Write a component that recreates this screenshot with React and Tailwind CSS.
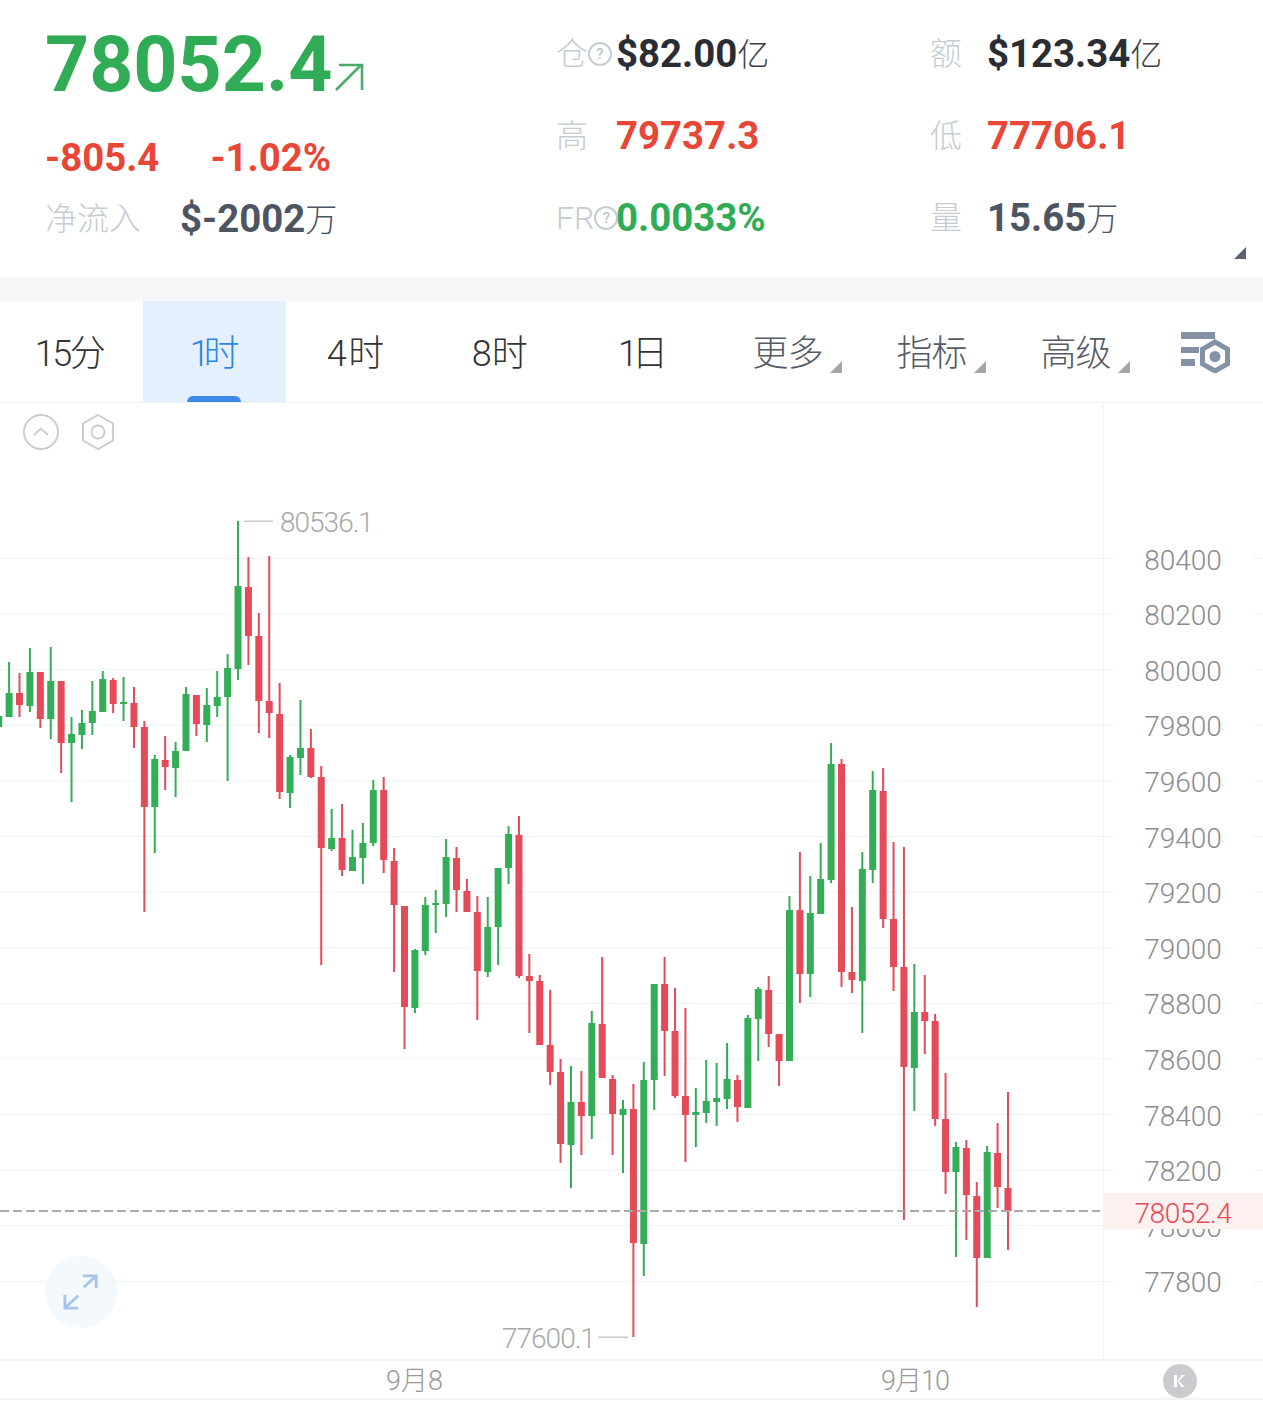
import React from 'react';

const GREEN = '#34ad57';
const RED = '#e44a58';

// g/r, wick top, wick bottom, body top, body bottom (page y)
const candles = [
  ['g', 662, 735, 716, 727], ['g', 662, 717, 693, 717], ['r', 673, 717, 693, 705], ['g', 648, 712, 672, 706],
  ['r', 672, 728, 672, 719], ['g', 647, 739, 681, 719], ['r', 681, 773, 681, 743], ['g', 717, 802, 734, 743],
  ['g', 710, 749, 723, 735], ['g', 681, 735, 711, 723], ['g', 671, 712, 679, 712], ['r', 678, 713, 680, 704],
  ['g', 677, 721, 702, 704], ['r', 687, 748, 703, 727], ['r', 721, 912, 727, 807], ['g', 755, 853, 759, 807],
  ['r', 736, 790, 760, 767], ['g', 742, 797, 751, 768], ['g', 687, 751, 694, 751], ['r', 695, 736, 695, 724],
  ['g', 688, 742, 705, 725], ['g', 671, 717, 697, 706], ['g', 654, 781, 668, 697], ['g', 521, 680, 586, 669],
  ['r', 557, 665, 587, 636], ['r', 613, 733, 636, 701], ['r', 556, 738, 701, 713], ['r', 683, 799, 714, 792],
  ['g', 755, 808, 757, 793], ['g', 700, 775, 748, 758], ['r', 729, 778, 748, 777], ['r', 766, 965, 777, 848],
  ['g', 809, 851, 838, 849], ['r', 804, 876, 838, 870], ['g', 830, 871, 857, 871], ['g', 823, 884, 843, 858],
  ['g', 780, 846, 790, 843], ['r', 777, 873, 790, 860], ['r', 848, 972, 861, 905], ['r', 906, 1049, 906, 1007],
  ['g', 949, 1013, 950, 1008], ['g', 897, 955, 905, 951], ['g', 890, 933, 903, 905], ['g', 839, 917, 857, 904],
  ['r', 847, 912, 858, 890], ['r', 879, 912, 891, 912], ['r', 896, 1020, 912, 971], ['g', 897, 977, 927, 972],
  ['g', 868, 965, 868, 927], ['g', 826, 884, 834, 868], ['r', 816, 978, 835, 976], ['r', 954, 1033, 976, 981],
  ['r', 975, 1045, 981, 1045], ['r', 990, 1085, 1045, 1072], ['r', 1059, 1163, 1072, 1144], ['g', 1066, 1188, 1102, 1145],
  ['r', 1071, 1155, 1102, 1116], ['g', 1011, 1139, 1023, 1116], ['r', 957, 1078, 1024, 1078], ['r', 1075, 1155, 1079, 1114],
  ['g', 1100, 1173, 1109, 1115], ['r', 1084, 1337, 1109, 1243], ['g', 1062, 1276, 1080, 1244], ['g', 984, 1110, 984, 1080],
  ['r', 957, 1076, 984, 1031], ['r', 988, 1098, 1031, 1096], ['r', 1008, 1162, 1096, 1115], ['g', 1088, 1147, 1112, 1115],
  ['g', 1060, 1123, 1101, 1113], ['g', 1063, 1126, 1098, 1102], ['g', 1043, 1109, 1079, 1099], ['r', 1075, 1122, 1080, 1107],
  ['g', 1015, 1108, 1018, 1108], ['g', 987, 1061, 989, 1019], ['r', 976, 1047, 990, 1034], ['r', 1034, 1086, 1034, 1061],
  ['g', 896, 1061, 910, 1061], ['r', 852, 1003, 910, 974], ['g', 876, 997, 913, 974], ['g', 843, 914, 879, 914],
  ['g', 743, 883, 764, 880], ['r', 759, 987, 764, 972], ['r', 907, 993, 972, 980], ['g', 852, 1033, 869, 981],
  ['g', 771, 883, 790, 870], ['r', 768, 928, 791, 919], ['r', 842, 991, 919, 967], ['r', 847, 1220, 967, 1067],
  ['g', 964, 1111, 1012, 1068], ['r', 975, 1054, 1012, 1021], ['r', 1014, 1126, 1021, 1119], ['r', 1073, 1194, 1119, 1172],
  ['g', 1142, 1257, 1147, 1172], ['r', 1140, 1240, 1148, 1195], ['r', 1182, 1307, 1196, 1258], ['g', 1146, 1258, 1152, 1258],
  ['r', 1123, 1208, 1153, 1187], ['r', 1092, 1250, 1188, 1211],
];

const ticks = [80400, 80200, 80000, 79800, 79600, 79400, 79200, 79000, 78800, 78600, 78400, 78200, 78000, 77800];

const HelpDot = () => (
  <span className="w-[24px] h-[24px] rounded-full border-2 border-[#c6ccd3] flex items-center justify-center text-[15px] leading-none font-medium text-[#bcc3cb] shrink-0">?</span>
);

const Stat = ({ label, help, value, unit, labelWidth = 'w-[60px]', color = 'text-[#2a2d34]', unitColor = 'text-[#3a3f47]' }) => (
  <div className="flex items-center">
    <div className={`flex items-center shrink-0 text-[32px] font-light text-[#c6ccd3] leading-none ${labelWidth}`}>
      {label}
      {help && <HelpDot />}
    </div>
    <span className={`text-[38.4px] font-bold leading-none ${color}`}>{value}</span>
    {unit && <span className={`text-[32px] font-light leading-none mt-[2px] ${unitColor}`}>{unit}</span>}
  </div>
);

const Corner = ({ className }) => (
  <svg viewBox="0 0 12 12" className={className}>
    <path d="M12 0V12H0Z" fill="currentColor" />
  </svg>
);

const Tab = ({ label, active, caret, fit = 'tracking-[-1px]' }) => (
  <div className={`relative h-full flex items-center justify-center pt-[4px] text-[36px] font-light ${caret ? 'w-[144px]' : 'w-[143.1px]'} ${active ? 'bg-[#e4f0fd] text-[#2f86ea]' : caret ? 'text-[#555c66]' : 'text-[#333]'}`}>
    <span className={fit}>{label}</span>
    {caret && <Corner className="absolute left-[115px] top-[60px] w-[12px] h-[12px] text-[#a5a5a5]" />}
    {active && <span className="absolute left-[44px] bottom-0 w-[54px] h-[6px] rounded-t-md bg-[#3d87e8]" />}
  </div>
);

const Chart = () => (
  <svg viewBox="0 403 1263 957" className="w-full h-full block">
    {ticks.map((t, i) => {
      const y = 558 + i * 55.6;
      return (
        <g key={t}>
          <rect x="0" y={y} width="1113" height="1" fill="#edf3fb" />
          <rect x="1253" y={y} width="10" height="1" fill="#edf3fb" />
          <text x="1183" y={y + 11.5} textAnchor="middle" className="text-[28px] font-light fill-[#8c8c8c]">{t}</text>
        </g>
      );
    })}
    <rect x="1103" y="403" width="1" height="957" fill="#f1f3f5" />

    {candles.map(([c, high, low, top, bottom], i) => {
      const cx = -1.3 + i * 10.405;
      const fill = c === 'g' ? GREEN : RED;
      return (
        <g key={i} fill={fill}>
          <rect x={cx - 1} y={high} width="2" height={low - high} />
          <rect x={cx - 3.5} y={top} width="7" height={Math.max(bottom - top, 2)} />
        </g>
      );
    })}

    <line x1="0" x2="1100" y1="1211" y2="1211" stroke="#aaaaaa" strokeWidth="2" strokeDasharray="9 4" />

    <rect x="244" y="520.5" width="29" height="1.5" fill="#cccccc" />
    <text x="280" y="532" className="text-[28px] font-light fill-[#a8a8a8] tracking-[-1px]">80536.1</text>
    <rect x="598" y="1336.5" width="30" height="1.5" fill="#cccccc" />
    <text x="502" y="1348" className="text-[28px] font-light fill-[#a8a8a8] tracking-[-1px]">77600.1</text>
  </svg>
);

export default function App() {
  return (
    <div className="w-[1263px] h-[1401px] bg-white overflow-hidden font-['Roboto','Noto_Sans_CJK_SC',sans-serif]">
      {/* header */}
      <div className="relative h-[277px] flex">
        <div className="w-[556px] shrink-0 pl-[45px]">
          <div className="flex items-end h-[110px]">
            <span className="text-[77px] font-bold leading-[90px] text-[#30ab56]">78052.4</span>
            <svg viewBox="0 0 30 30" className="w-[30px] h-[30px] ml-[2px] mb-[18px]" fill="none" stroke="#4aab6a" strokeWidth="2.6">
              <path d="M2 28L27 3M5 3H28V28" />
            </svg>
          </div>
          <div className="flex items-center mt-[26px] h-[44px] text-[38.4px] font-bold text-[#e84636] leading-none">
            <span>-805.4</span>
            <span className="ml-[51px]">-1.02%</span>
          </div>
          <div className="flex items-center mt-[17px] h-[44px]">
            <span className="w-[135px] text-[32px] font-light leading-none text-[#c6ccd3]">净流入</span>
            <span className="text-[38.4px] font-bold leading-none text-[#4d5562]">$-2002</span>
            <span className="text-[32px] font-light leading-none mt-[2px] text-[#4d5562]">万</span>
          </div>
        </div>
        <div className="flex-1 grid grid-cols-[374px_1fr] auto-rows-[82px] pt-[13px]">
          <Stat label="仓" help value="$82.00" unit="亿" />
          <Stat label="额" labelWidth="w-[57px]" value="$123.34" unit="亿" />
          <Stat label="高" value="79737.3" color="text-[#e84636]" />
          <Stat label="低" labelWidth="w-[57px]" value="77706.1" color="text-[#e84636]" />
          <Stat label="FR" help value="0.0033%" color="text-[#30ab56]" />
          <Stat label="量" labelWidth="w-[57px]" value="15.65" unit="万" color="text-[#4d5562]" unitColor="text-[#4d5562]" />
        </div>
        <Corner className="absolute left-[1234px] top-[247px] w-[12px] h-[12px] text-[#5b6370]" />
      </div>

      <div className="h-[24px] bg-[#f5f7f8]" />

      {/* period tabs */}
      <div className="h-[102px] flex border-b border-[#f0f1f3]">
        <Tab label="15分" fit="tracking-[-2.5px] mr-[5px]" />
        <Tab label="1时" active fit="tracking-[-6px] mr-[6px]" />
        <Tab label="4时" fit="tracking-[1.5px] mr-[3px]" />
        <Tab label="8时" fit="mr-[2px]" />
        <Tab label="1日" fit="tracking-[-6px] mr-[8px]" />
        <Tab label="更多" caret />
        <Tab label="指标" caret />
        <Tab label="高级" caret />
        <div className="flex-1 pl-[33.5px] pt-[30px]">
          <svg viewBox="0 0 50 42" className="w-[50px] h-[42px]" fill="#8592a5">
            <rect x="0" y="1" width="34" height="7" />
            <rect x="0" y="16" width="18" height="6" />
            <rect x="0" y="28" width="14" height="7" />
            <path d="M34 11L46.5 18.2V32.8L34 40L21.5 32.8V18.2Z" fill="none" stroke="#8592a5" strokeWidth="5" />
            <circle cx="34" cy="25.5" r="5.5" />
          </svg>
        </div>
      </div>

      {/* chart */}
      <div className="relative h-[957px]">
        <Chart />

        <div className="absolute left-[22px] top-[10px] flex items-center gap-[19px]">
          <svg viewBox="0 0 38 38" className="w-[38px] h-[38px]" fill="none" stroke="#c8ced4" strokeWidth="2">
            <circle cx="19" cy="19" r="17" />
            <path d="M12 22L19 15.5L26 22" />
          </svg>
          <svg viewBox="0 0 38 38" className="w-[38px] h-[38px]" fill="none" stroke="#c8ced4" strokeWidth="2">
            <path d="M19 2L34 10.5V27.5L19 36L4 27.5V10.5Z" />
            <circle cx="19" cy="19" r="6.5" />
          </svg>
        </div>

        <div className="absolute left-[45px] top-[853px] w-[72px] h-[72px] rounded-full bg-[#f3f8fe]/90 flex items-center justify-center">
          <svg viewBox="0 0 38 38" className="w-[36px] h-[36px]" fill="none" stroke="#a9c4ec" strokeWidth="3">
            <path d="M22 14L35 2M21 2H35V15" />
            <path d="M16 23L3 35M2 22V36H16" />
          </svg>
        </div>

        <div className="absolute left-[1103px] right-0 top-[790px] h-[36px] bg-[#fdf1f0] flex items-center justify-center pt-[5px] text-[28px] font-light tracking-[-0.4px] text-[#e44a58]">
          78052.4
        </div>
      </div>

      {/* time axis */}
      <div className="h-[34px] pt-[3px] box-content -mt-[1px] flex items-center border-y-2 border-[#f3f4f6] text-[27px] font-light leading-none text-[#999]">
        <span className="ml-[386px]">9月8</span>
        <span className="ml-[438px] tracking-[-1px]">9月10</span>
        <span className="ml-auto mr-[66px] w-[34px] h-[34px] rounded-full bg-[#c9cbcf] flex items-center justify-center">
          <svg viewBox="0 0 16 16" className="w-[16px] h-[16px]" fill="#ffffff">
            <rect x="2" y="2" width="3" height="12" />
            <path d="M13 2L7 8L13 14H9.5L5.5 8L9.5 2Z" />
          </svg>
        </span>
      </div>
    </div>
  );
}
